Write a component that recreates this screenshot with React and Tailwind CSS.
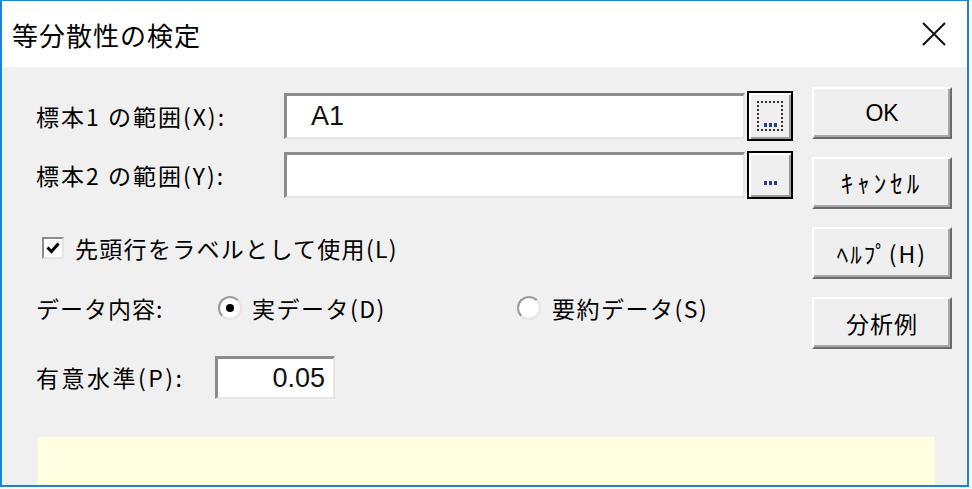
import React from 'react';

const JP = { fontFamily: '"Noto Sans CJK JP", "Noto Sans", sans-serif' };
const LAT = { fontFamily: '"Liberation Sans", Arial, sans-serif' };

// 凹んだ入力欄
const Sunken = ({ className = '', children }) => (
  <div
    className={`bg-white border-t-[3px] border-l-[3px] border-b-2 border-r-2 border-t-[#8c8c8c] border-l-[#8c8c8c] border-b-[#e6e6e6] border-r-[#e6e6e6] ${className}`}
  >
    {children}
  </div>
);

// 押しボタン
const PushButton = ({ children, className = '' }) => (
  <div className={`w-[140px] h-[52px] flex items-center justify-center bg-[#efefef] border-2 border-t-white border-l-white border-r-[#6b6b6b] border-b-[#6b6b6b] shadow-[inset_-2px_-2px_0_#a8a8a8] text-[23px] text-black ${className}`}>
    {children}
  </div>
);

// 参照ボタン (...)
const BrowseButton = ({ focused, tall }) => (
  <div className={`w-[46px] ${tall ? 'h-[50px]' : 'h-[48px]'} border-2 border-black bg-[#efefef] flex shadow-[inset_2px_2px_0_#ffffff,inset_-2px_-2px_0_#9a9a9a]`}>
    <div className="relative flex-1 m-[8px] flex items-end justify-center pb-[4px]">
      {focused && <div className="absolute inset-0 border-2 border-dotted border-[#333]" />}
      <div className="flex gap-[2px]">
        <span className="w-[3px] h-[4px] bg-[#2a3c8f]" />
        <span className="w-[3px] h-[4px] bg-[#2a3c8f]" />
        <span className="w-[3px] h-[4px] bg-[#2a3c8f]" />
      </div>
    </div>
  </div>
);

const Radio = ({ checked }) => (
  <div className="w-[24px] h-[24px] rounded-full bg-white border-2 border-t-[#9a9a9a] border-l-[#9a9a9a] border-r-[#e4e4e4] border-b-[#e4e4e4] flex items-center justify-center">
    {checked && <div className="w-[8px] h-[8px] rounded-full bg-black" />}
  </div>
);

export default function App() {
  return (
    <div className="w-[969px] h-[487px] border-t border-l-2 border-r-2 border-b-2 border-[#1883d7] flex flex-col" style={JP}>
      {/* タイトルバー */}
      <div className="h-[66px] bg-white flex items-center justify-between pl-[10px] pr-[21px]">
        <span className="text-[26px] tracking-[1px] text-black">等分散性の検定</span>
        <svg width="24" height="24" viewBox="0 0 24 24">
          <path d="M1 1 L23 23 M23 1 L1 23" stroke="#111" strokeWidth="2" />
        </svg>
      </div>

      <div className="flex-1 bg-[#f0f0f0] flex flex-col text-[23px] text-black">
        <div className="flex">
          {/* 左側 */}
          <div className="pl-[34px] flex flex-col">
            <div className="mt-[24px] h-[50px] flex items-center">
              <span className="w-[248px] tracking-[2px]">標本1 の範囲(X):</span>
              <Sunken className="w-[461px] h-[46px] flex items-center pl-[24px]">
                <span className="text-[27px] text-[#111]" style={LAT}>A1</span>
              </Sunken>
              <div className="ml-[2px]">
                <BrowseButton focused tall />
              </div>
            </div>

            <div className="mt-[10px] h-[48px] flex items-center">
              <span className="w-[248px] tracking-[2px]">標本2 の範囲(Y):</span>
              <Sunken className="w-[461px] h-[46px]" />
              <div className="ml-[2px]">
                <BrowseButton />
              </div>
            </div>

            <div className="mt-[37px] h-[24px] flex items-center">
              <div className="ml-[6px] w-[22px] h-[22px] bg-white border-2 border-t-[#8c8c8c] border-l-[#8c8c8c] border-r-[#e4e4e4] border-b-[#e4e4e4] flex items-center justify-center">
                <svg width="14" height="14" viewBox="0 0 14 14">
                  <path d="M1.5 6.5 L5.5 10.5 L12.5 2.5" stroke="#000" strokeWidth="3" fill="none" />
                </svg>
              </div>
              <span className="ml-[11px] tracking-[1.3px]">先頭行をラベルとして使用(L)</span>
            </div>

            <div className="mt-[35px] h-[26px] flex items-center">
              <span className="w-[182px] tracking-[1px]">データ内容:</span>
              <div className="w-[299px] flex items-center">
                <Radio checked />
                <span className="ml-[10px] tracking-[1.5px]">実データ(D)</span>
              </div>
              <div className="flex items-center">
                <Radio />
                <span className="ml-[11px] tracking-[1.5px]">要約データ(S)</span>
              </div>
            </div>

            <div className="mt-[35px] h-[43px] flex items-center">
              <span className="w-[179px] tracking-[2.5px]">有意水準(P):</span>
              <Sunken className="w-[120px] h-[43px] flex items-center justify-end pr-[8px]">
                <span className="text-[27px] text-[#111]" style={LAT}>0.05</span>
              </Sunken>
            </div>
          </div>

          {/* 右側ボタン */}
          <div className="ml-[19px] pt-[20px] flex flex-col gap-[18px]">
            <PushButton><span style={LAT}>OK</span></PushButton>
            <PushButton className="tracking-[4px] text-[25px]">ｷｬﾝｾﾙ</PushButton>
            <PushButton className="tracking-[2px]">ﾍﾙﾌﾟ(H)</PushButton>
            <PushButton className="tracking-[1px]">分析例</PushButton>
          </div>
        </div>

        <div className="ml-[36px] mt-[38px] w-[897px] flex-1 bg-[#fffee0]" />
      </div>
    </div>
  );
}
